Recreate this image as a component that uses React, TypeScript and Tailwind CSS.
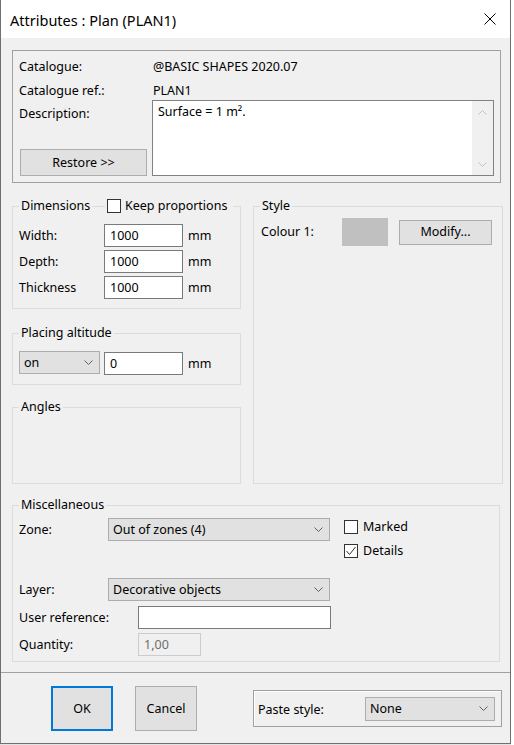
import React from "react";

const Chevron = ({ up = false, color = "#606060" }: { up?: boolean; color?: string }) => (
  <svg width="9" height="5" viewBox="0 0 9 5" fill="none">
    <path d={up ? "M0.5 4.5 L4.5 0.5 L8.5 4.5" : "M0.5 0.5 L4.5 4.5 L8.5 0.5"} stroke={color} strokeWidth="1" />
  </svg>
);

const Select = ({ text, w, h = "h-[23px]" }: { text: string; w: string; h?: string }) => (
  <div className={`${w} ${h} flex items-center justify-between bg-[#e1e1e1] border border-[#adadad] pl-[4px] pr-[6px] leading-[16px]`}>
    <span>{text}</span>
    <Chevron />
  </div>
);

const Field = ({ text, w }: { text: string; w: string }) => (
  <div className={`${w} h-[23px] flex items-center bg-white border border-[#7a7a7a] pl-[5px] leading-[16px]`}>{text}</div>
);

const Check = ({ checked = false }: { checked?: boolean }) => (
  <div className="w-[14px] h-[14px] border border-[#333333] bg-white flex items-center justify-center shrink-0">
    {checked && (
      <svg width="12" height="12" viewBox="0 0 12 12" fill="none">
        <path d="M1.5 6 L4.5 9.5 L10.5 2" stroke="#333333" strokeWidth="1" />
      </svg>
    )}
  </div>
);

const Legend = ({ children, left = "left-[6px]" }: { children: React.ReactNode; left?: string }) => (
  <div className={`absolute ${left} top-[-9px] h-[16px] leading-[16px] px-[2px] bg-[#f0f0f0] flex items-center`}>{children}</div>
);

export default function App() {
  return (
    <div
      className="w-[514px] h-[745px] bg-white text-black text-[12.5px] leading-[16px]"
      style={{ fontFamily: '"Segoe UI", "Noto Sans", "Open Sans", sans-serif' }}
    >
      <div className="w-[511px] h-[744px] bg-[#f0f0f0] border-x border-b border-[#707070] flex flex-col">
        {/* Title bar */}
        <div className="h-[38px] bg-white flex items-center justify-between pl-[9px] pr-[14px] shrink-0">
          <span className="text-[14.5px] leading-[20px] pt-[1px]">Attributes : Plan (PLAN1)</span>
          <svg width="12" height="12" viewBox="0 0 12 12" fill="none">
            <path d="M0.5 0.5 L11.5 11.5 M11.5 0.5 L0.5 11.5" stroke="#000" strokeWidth="1" />
          </svg>
        </div>

        {/* Top group */}
        <div className="mt-[12px] ml-[11px] w-[489px] h-[133px] border border-[#a0a0a0] pl-[6px] pt-[8px] shrink-0">
          <div className="flex h-[16px]">
            <span className="w-[134px]">Catalogue:</span>
            <span>@BASIC SHAPES 2020.07</span>
          </div>
          <div className="flex h-[16px] mt-[8px]">
            <span className="w-[134px]">Catalogue ref.:</span>
            <span>PLAN1</span>
          </div>
          <div className="flex mt-[1px]">
            <div className="w-[133px] h-[76px] flex flex-col justify-between">
              <span className="mt-[6px]">Description:</span>
              <div className="ml-[1px] w-[127px] h-[27px] bg-[#e1e1e1] border border-[#adadad] flex items-center justify-center">
                Restore &gt;&gt;
              </div>
            </div>
            <div className="w-[342px] h-[76px] border border-[#828282] bg-white flex">
              <span className="pl-[5px] pt-[3px]">Surface = 1 m².</span>
              <div className="ml-auto w-[21px] bg-[#f0f0f0] flex flex-col justify-between items-center pt-[9px] pb-[8px]">
                <Chevron up color="#c0c0c0" />
                <Chevron color="#c0c0c0" />
              </div>
            </div>
          </div>
        </div>

        {/* Middle row */}
        <div className="mt-[23px] ml-[11px] flex gap-[12px] shrink-0">
          <div className="w-[229px] flex flex-col">
            <div className="h-[103px] border border-[#dcdcdc] relative pl-[6px] pt-[17px]">
              <Legend>Dimensions</Legend>
              <div className="absolute left-[92px] top-[-9px] h-[16px] leading-[16px] pl-[2px] pr-[6px] bg-[#f0f0f0] flex items-center gap-[4px]">
                <Check />
                <span>Keep proportions</span>
              </div>
              <div className="flex flex-col gap-[3px]">
                {["Width:", "Depth:", "Thickness"].map((l) => (
                  <div key={l} className="flex items-center h-[23px]">
                    <span className="w-[85px]">{l}</span>
                    <Field text="1000" w="w-[79px]" />
                    <span className="ml-[5px]">mm</span>
                  </div>
                ))}
              </div>
            </div>

            <div className="mt-[24px] h-[52px] border border-[#dcdcdc] relative pl-[6px] pt-[17px]">
              <Legend>Placing altitude</Legend>
              <div className="flex items-start">
                <Select text="on" w="w-[81px]" />
                <div className="ml-[4px] mt-[1px]">
                  <Field text="0" w="w-[79px]" />
                </div>
                <span className="ml-[5px] mt-[1px] h-[23px] flex items-center">mm</span>
              </div>
            </div>

            <div className="mt-[22px] h-[77px] border border-[#dcdcdc] relative">
              <Legend>Angles</Legend>
            </div>
          </div>

          <div className="w-[250px] h-[278px] border border-[#dcdcdc] relative pl-[7px] pt-[11px]">
            <Legend>Style</Legend>
            <div className="flex items-center">
              <span className="w-[81px]">Colour 1:</span>
              <div className="w-[46px] h-[28px] bg-[#c0c0c0]" />
              <div className="ml-[11px] w-[93px] h-[25px] bg-[#e1e1e1] border border-[#adadad] flex items-center justify-center">
                Modify...
              </div>
            </div>
          </div>
        </div>

        {/* Miscellaneous */}
        <div className="mt-[21px] ml-[11px] w-[488px] h-[157px] border border-[#dcdcdc] relative pl-[6px] pt-[12px] flex shrink-0">
          <Legend>Miscellaneous</Legend>
          <div className="w-[312px] flex flex-col">
            <div className="flex items-center h-[23px]">
              <span className="w-[89px]">Zone:</span>
              <Select text="Out of zones (4)" w="w-[222px]" />
            </div>
            <div className="flex items-center h-[23px] mt-[37px]">
              <span className="w-[89px]">Layer:</span>
              <Select text="Decorative objects" w="w-[222px]" />
            </div>
            <div className="flex items-center h-[23px] mt-[5px]">
              <span className="w-[119px]">User reference:</span>
              <Field text="" w="w-[193px]" />
            </div>
            <div className="flex items-center h-[23px] mt-[4px]">
              <span className="w-[119px]">Quantity:</span>
              <div className="w-[63px] h-[23px] flex items-center bg-[#f0f0f0] border border-[#cccccc] pl-[5px] text-[#6d6d6d]">
                1,00
              </div>
            </div>
          </div>
          <div className="ml-[13px] pt-[2px] flex flex-col gap-[10px]">
            <div className="flex items-center h-[14px] gap-[5px]">
              <Check />
              <span>Marked</span>
            </div>
            <div className="flex items-center h-[14px] gap-[5px]">
              <Check checked />
              <span>Details</span>
            </div>
          </div>
        </div>

        {/* Separator */}
        <div className="mt-[10px] h-[1px] bg-[#a0a0a0] shrink-0" />

        {/* Bottom buttons */}
        <div className="pt-[13px] pl-[50px] flex items-start">
          <div className="w-[62px] h-[45px] border-2 border-[#0078d7] bg-[#e1e1e1] flex items-center justify-center">OK</div>
          <div className="ml-[22px] w-[62px] h-[45px] border border-[#adadad] bg-[#e1e1e1] flex items-center justify-center">
            Cancel
          </div>
          <div className="ml-[56px] mt-[4px] w-[249px] h-[37px] border border-[#a0a0a0] shadow-[inset_1px_1px_0_#ffffff] flex items-center pl-[4px]">
            <span className="w-[107px] mt-[3px]">Paste style:</span>
            <Select text="None" w="w-[130px]" h="h-[24px]" />
          </div>
        </div>
      </div>
      <div className="w-[511px] h-[1px] bg-[#e3e3e3]" />
    </div>
  );
}
